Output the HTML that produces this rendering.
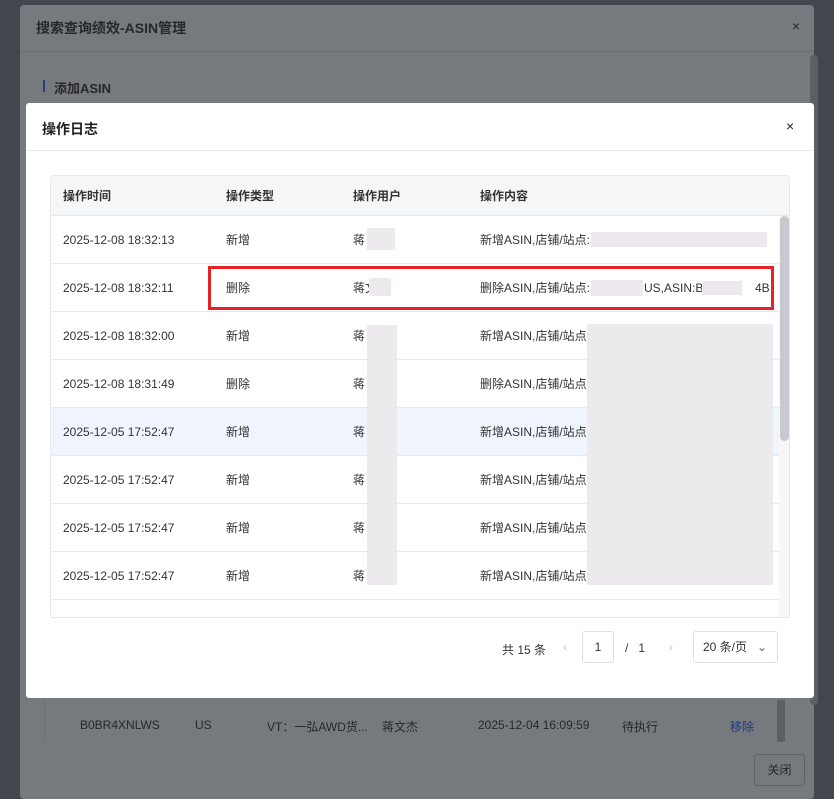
<!DOCTYPE html><html><head><meta charset="utf-8"><style>
*{margin:0;padding:0;box-sizing:border-box}
body{width:834px;height:799px;overflow:hidden;background:#43474d;font-family:"Liberation Sans","Noto Sans CJK SC",sans-serif;position:relative;font-size:12px;color:#333;white-space:nowrap}
.a{position:absolute}
.outer{left:20px;top:5px;width:794px;height:794px;background:#76797e;border-radius:4px}
.m{left:26px;top:103px;width:788px;height:595px;background:#fff;border-radius:3px}
.row{position:absolute;left:0;width:728px;height:48px;border-bottom:1px solid #e6e8ee;line-height:48px}
.row span{position:absolute;top:0;white-space:nowrap}
.blur{background:#eceaec}
</style></head><body>
<div class="a outer"></div>
<div class="a" style="left:36px;top:18px;font-size:14px;font-weight:bold;color:#26282b">搜索查询绩效-ASIN管理</div>
<div class="a" style="left:792px;top:18px;font-size:14px;color:#26282b">×</div>
<div class="a" style="left:20px;top:51px;width:794px;height:1px;background:#6c6f74"></div>
<div class="a" style="left:43px;top:80px;width:2px;height:12px;background:#2a3c7a"></div>
<div class="a" style="left:54px;top:78px;font-size:13px;font-weight:bold;color:#26282b">添加ASIN</div>
<div class="a" style="left:810px;top:55px;width:8px;height:650px;background:#5c5f64;border-radius:4px"></div>
<div class="a" style="left:44px;top:700px;width:742px;height:42px;border-left:1px solid #6c6f74"></div>
<div class="a" style="left:80px;top:718px;color:#26282b">B0BR4XNLWS</div>
<div class="a" style="left:195px;top:718px;color:#26282b">US</div>
<div class="a" style="left:267px;top:718px;color:#26282b">VT：一弘AWD货...</div>
<div class="a" style="left:382px;top:718px;color:#26282b">蒋文杰</div>
<div class="a" style="left:478px;top:718px;color:#26282b">2025-12-04 16:09:59</div>
<div class="a" style="left:622px;top:718px;color:#26282b">待执行</div>
<div class="a" style="left:730px;top:718px;color:#1f3b8a">移除</div>
<div class="a" style="left:777px;top:700px;width:8px;height:42px;background:#5c5f64"></div>
<div class="a" style="left:754px;top:754px;width:51px;height:32px;border:1px solid #606368;border-radius:3px;line-height:30px;text-align:center;color:#26282b">关闭</div>

<div class="a m">
<div class="a" style="left:16px;top:16px;font-size:14px;font-weight:bold;color:#222">操作日志</div>
<div class="a" style="left:760px;top:15px;font-size:14px;color:#222">×</div>
<div class="a" style="left:0;top:47px;width:788px;height:1px;background:#e6e8ee"></div>
<div class="a" style="left:24px;top:72px;width:740px;height:443px;border:1px solid #e6e8ee;border-radius:3px;overflow:hidden">
<div class="a" style="left:0;top:0;width:740px;height:40px;background:#f5f6f8;border-bottom:1px solid #e6e8ee;font-weight:bold;line-height:40px">
<span class="a" style="left:12px">操作时间</span><span class="a" style="left:175px">操作类型</span><span class="a" style="left:302px">操作用户</span><span class="a" style="left:429px">操作内容</span></div>
<div class="row" style="top:40px"><span style="left:12px">2025-12-08 18:32:13</span><span style="left:175px">新增</span><span style="left:302px">蒋</span><span style="left:429px">新增ASIN,店铺/站点:S</span></div>
<div class="row" style="top:88px"><span style="left:12px">2025-12-08 18:32:11</span><span style="left:175px">删除</span><span style="left:302px">蒋文</span><span style="left:429px">删除ASIN,店铺/站点:S</span><span style="left:593px">US,ASIN:B0D</span><span style="left:704px">4B</span></div>
<div class="row" style="top:136px"><span style="left:12px">2025-12-08 18:32:00</span><span style="left:175px">新增</span><span style="left:302px">蒋</span><span style="left:429px">新增ASIN,店铺/站点:</span></div>
<div class="row" style="top:184px"><span style="left:12px">2025-12-08 18:31:49</span><span style="left:175px">删除</span><span style="left:302px">蒋</span><span style="left:429px">删除ASIN,店铺/站点:</span></div>
<div class="row" style="top:232px;background:#f0f4fc"><span style="left:12px">2025-12-05 17:52:47</span><span style="left:175px">新增</span><span style="left:302px">蒋</span><span style="left:429px">新增ASIN,店铺/站点:</span></div>
<div class="row" style="top:280px"><span style="left:12px">2025-12-05 17:52:47</span><span style="left:175px">新增</span><span style="left:302px">蒋</span><span style="left:429px">新增ASIN,店铺/站点:</span></div>
<div class="row" style="top:328px"><span style="left:12px">2025-12-05 17:52:47</span><span style="left:175px">新增</span><span style="left:302px">蒋</span><span style="left:429px">新增ASIN,店铺/站点:</span></div>
<div class="row" style="top:376px"><span style="left:12px">2025-12-05 17:52:47</span><span style="left:175px">新增</span><span style="left:302px">蒋</span><span style="left:429px">新增ASIN,店铺/站点:</span></div>
<div class="a" style="left:728px;top:40px;width:12px;height:403px;background:#f7f7f8"></div>
<div class="a" style="left:729px;top:40px;width:9px;height:225px;background:#c7c9ce;border-radius:5px"></div>
</div>
<div class="a blur" style="left:565px;top:129px;width:176px;height:15px"></div>
<div class="a blur" style="left:565px;top:177px;width:52px;height:16px"></div>
<div class="a blur" style="left:676px;top:178px;width:40px;height:14px"></div>
<div class="a blur" style="left:341px;top:125px;width:28px;height:22px"></div>
<div class="a blur" style="left:343px;top:175px;width:22px;height:18px"></div>
<div class="a blur" style="left:341px;top:222px;width:30px;height:260px"></div>
<div class="a blur" style="left:561px;top:221px;width:186px;height:261px"></div>
<div class="a" style="left:182px;top:163px;width:566px;height:44px;border:3px solid #e4222a"></div>
<div class="a" style="left:476px;top:538px">共 15 条</div>
<div class="a" style="left:537px;top:537px;color:#c0c4cc">‹</div>
<div class="a" style="left:556px;top:528px;width:32px;height:32px;border:1px solid #dcdfe6;border-radius:3px;line-height:30px;text-align:center">1</div>
<div class="a" style="left:599px;top:538px">/&nbsp;&nbsp;&nbsp;1</div>
<div class="a" style="left:643px;top:537px;color:#c0c4cc">›</div>
<div class="a" style="left:667px;top:528px;width:85px;height:32px;border:1px solid #dcdfe6;border-radius:3px;line-height:30px;padding-left:9px">20 条/页 <span style="position:absolute;right:10px;color:#666">⌄</span></div>
</div>
</body></html>
